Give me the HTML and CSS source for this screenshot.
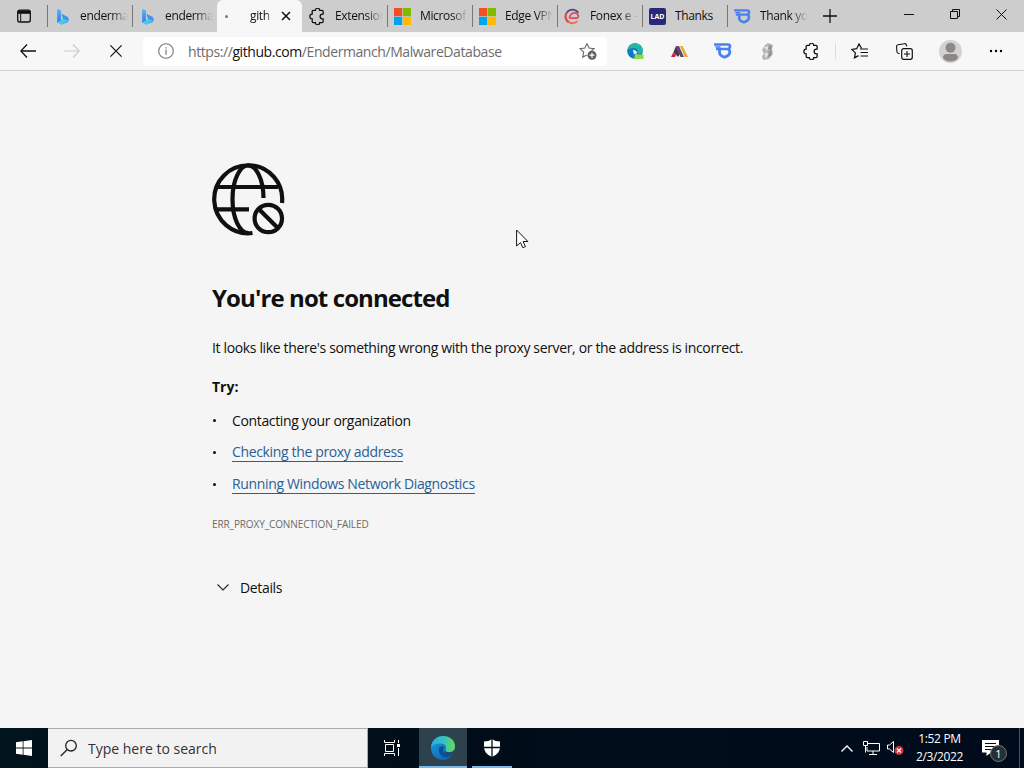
FILE: index.html
```
<!DOCTYPE html>
<html lang="en">
<head>
    <meta charset="UTF-8">
    <title>github.com</title>
    <link rel="stylesheet" href="styles.css">
</head>
<body>

<!-- shared icons -->
<svg class="defs" width="0" height="0">
    <linearGradient id="bing-blue" x1="0" y1="0" x2="0" y2="1">
        <stop offset="0" stop-color="#58b6f5"/>
        <stop offset="1" stop-color="#2878e8"/>
    </linearGradient>
    <linearGradient id="edge-green" x1="0" y1="0" x2="1" y2="0">
        <stop offset="0" stop-color="#2aa9e0"/>
        <stop offset=".55" stop-color="#36c3c0"/>
        <stop offset="1" stop-color="#66dd55"/>
    </linearGradient>
    <linearGradient id="edge-blue" x1="0" y1="0" x2="1" y2="1">
        <stop offset="0" stop-color="#1d9de2"/>
        <stop offset="1" stop-color="#0d57a8"/>
    </linearGradient>
    <symbol id="bing" viewBox="0 0 16 16">
        <path d="M3 1l3.500 1v10L3 14z" fill="url(#bing-blue)"/>
        <path d="M7 5.500l6 3q2 3-.5 5L7 15.500 3 13.500l5.500-3z" fill="#3d95f0"/>
        <path d="M3 13.500l6-3.200 4 1.400-6 4z" fill="#47c8ee"/>
    </symbol>
    <symbol id="microsoft" viewBox="0 0 16 16">
        <path d="M0 0h7.700v7.700H0z" fill="#f25022"/>
        <path d="M8.300 0H16v7.700H8.300z" fill="#7fba00"/>
        <path d="M0 8.300h7.700V16H0z" fill="#00a4ef"/>
        <path d="M8.300 8.300H16V16H8.300z" fill="#ffb900"/>
    </symbol>
    <symbol id="puzzle" viewBox="0 0 16 16">
        <path d="M4 2.200h2a2 2 0 0 1 4 0h2.300q1 0 1 1v2.500h-.6a2.200 2.200 0 0 0 0 4.500h.6v2.600q0 1-1 1H10a2 2 0 0 1-4 0H4q-1 0-1-1v-2.600a2.200 2.200 0 0 1 0-4.400V3.200q0-1 1-1z" fill="none" stroke="currentColor" stroke-width="1.200"/>
    </symbol>
    <symbol id="shield-b" viewBox="0 0 18 18">
        <path d="M0 2.500h14q2 0 2 2T14 7H2" fill="none" stroke="#4c80ef" stroke-width="2.600"/>
        <path d="M5.500 7v3.500q0 3 5 4.700 5-1.700 5.300-4.700Q16 8 14 7" fill="none" stroke="#4c80ef" stroke-width="2.800"/>
        <path d="M1.500 5h5" stroke="#4c80ef" stroke-width="1.600"/>
    </symbol>
    <symbol id="edge" viewBox="0 0 24 24">
        <circle cx="12" cy="12" r="12" fill="url(#edge-blue)"/>
        <path d="M0 11.500C.5 4.500 5.800 0 12 0c7 0 12 4.600 12 10.200 0 4-3 6-6 6-2.800 0-4.300-1.200-3.600-2.300 2-3.200-.4-6.400-4.400-6.400-4.800 0-8.400 2-10 4z" fill="url(#edge-green)"/>
        <path d="M8.200 12c-1.500 5 3 10 8.300 9.200 2-.3 3.600-1.200 5-2.400.5-.4.200-.9-.4-.7-5.100 1.700-9.200-1-9-4.400 0-1.200.6-2 1.200-2.600-2-.9-4.300-.5-5.100.9z" fill="#0b4f96"/>
        <path d="M24 14c-2.400 2.900-9 2.900-9.500.7-.1-.3 0-.6.200-.8-1.700 1.200-1.600 4.700 4.100 4.700 2 0 4-.3 5-1z" class="edge-cut"/>
    </symbol>
</svg>

<div class="browser">
    <div class="tabstrip">
        <div class="tab-menu">
            <svg width="16" height="16" viewBox="0 0 16 16"><rect x="1.700" y="2.200" width="12.600" height="11.800" rx="2" fill="none" stroke="#111" stroke-width="1.300"/><path d="M2 2.500h12v3.300H2z" fill="#111"/><path d="M4.700 5v8.500" stroke="#111" stroke-width="1"/></svg>
        </div>
        <div class="tab"><svg class="favicon"><use href="#bing"/></svg><span class="tab-title fade">enderma</span></div>
        <div class="tab"><svg class="favicon"><use href="#bing"/></svg><span class="tab-title fade">enderma</span></div>
        <div class="tab active">
            <span class="loading-dot"></span>
            <span class="tab-title fade">gith</span>
            <svg class="tab-close" width="10" height="10" viewBox="0 0 10 10"><path d="M1 1l8 8M9 1L1 9" stroke="#111" stroke-width="1.500"/></svg>
        </div>
        <div class="tab first"><svg class="favicon"><use href="#puzzle"/></svg><span class="tab-title fade">Extension</span></div>
        <div class="tab"><svg class="favicon"><use href="#microsoft"/></svg><span class="tab-title fade">Microsof</span></div>
        <div class="tab"><svg class="favicon"><use href="#microsoft"/></svg><span class="tab-title fade">Edge VPN</span></div>
        <div class="tab">
            <svg class="favicon" viewBox="0 0 16 16"><path d="M13.500 4.500A6.500 6.500 0 0 0 2.500 4.500" fill="none" stroke="#4e4b8c" stroke-width="1.600"/><path d="M2.500 4.500a6.500 6.500 0 0 0 2 9" fill="none" stroke="#e04848" stroke-width="2.200"/><path d="M4.500 13.300q4.500 2.500 8-1" fill="none" stroke="#ee7040" stroke-width="1.800"/><path d="M5 9.500h6.500q2 0 2-2-.5-3-4-3-3.500.5-4.500 5" fill="none" stroke="#d94a64" stroke-width="1.600"/></svg>
            <span class="tab-title fade">Fonex e -</span>
        </div>
        <div class="tab"><span class="favicon lad">LAD</span><span class="tab-title">Thanks</span></div>
        <div class="tab"><svg class="favicon"><use href="#shield-b"/></svg><span class="tab-title fade">Thank yo</span></div>
        <div class="new-tab">
            <svg width="14" height="14" viewBox="0 0 14 14"><path d="M7 0v14M0 7h14" stroke="#111" stroke-width="1.300"/></svg>
        </div>
        <div class="window-controls">
            <span><svg width="10" height="10" viewBox="0 0 10 10"><path d="M0 5.500h10" stroke="#111"/></svg></span>
            <span><svg width="10" height="10" viewBox="0 0 10 10"><path d="M.5 2.500h7v7h-7zM2.500 2V.5h7v7H8" fill="none" stroke="#111"/></svg></span>
            <span><svg width="11" height="11" viewBox="0 0 11 11"><path d="M.5.500l10 10M10.500.500l-10 10" stroke="#111"/></svg></span>
        </div>
    </div>

    <div class="toolbar">
        <span class="tool"><svg width="16" height="14" viewBox="0 0 16 14"><path d="M7 .5L.8 7 7 13.500M1 7h15" fill="none" stroke="#111" stroke-width="1.300"/></svg></span>
        <span class="tool disabled"><svg width="16" height="14" viewBox="0 0 16 14"><path d="M9 .5L15.200 7 9 13.500M15 7H0" fill="none" stroke="#ccc" stroke-width="1.200"/></svg></span>
        <span class="tool"><svg width="12" height="12" viewBox="0 0 12 12"><path d="M.4.400l11.200 11.200M11.600.400L.4 11.600" stroke="#111" stroke-width="1.200"/></svg></span>
        <div class="address">
            <svg width="16" height="16" viewBox="0 0 16 16"><circle cx="8" cy="8" r="7.300" fill="none" stroke="#777" stroke-width="1.100"/><path d="M8 6.800v5M8 4.200v1.300" stroke="#777" stroke-width="1.200"/></svg>
            <span class="url">https://<b>github.com</b>/Endermanch/MalwareDatabase</span>
            <svg width="18" height="18" viewBox="0 0 18 18"><path d="M8 1.500l2.100 4.600 4.900.6-3.700 3.400M8 1.500L5.900 6.100 1 6.700l3.700 3.500-1 5 4-2.300" fill="none" stroke="#666" stroke-width="1.100"/><circle cx="13" cy="13.200" r="4.500" fill="#606060"/><path d="M13 10.700v5M10.500 13.200h5" stroke="#fff" stroke-width="1.200"/></svg>
        </div>
        <div class="extensions">
            <span class="tool"><svg width="17" height="17" viewBox="0 0 17 17"><circle cx="8" cy="8" r="7.800" fill="#1279c9"/><path d="M.5 7C1.500 2.500 4.500.2 8 .2c5 0 8.300 3.800 7.800 8-.4 2.300-2.600 3-5 2.400C12 7 9 4.500 6 5Q2 5.500.5 7z" fill="#22b5a8"/><path d="M6 6.500l1 5 1.200-1.200 1.300 2 .8-.5L9 9.700l1.800-.4z" fill="#fff"/><path d="M8 11.500h8.500V16H7z" fill="#8edc45"/></svg></span>
            <span class="tool"><svg width="17" height="13" viewBox="0 0 17 13"><path d="M0 12l2.500-5L5 10l-1 2z" fill="#cf2440"/><path d="M2.500 7L5 1l4 8-2 3z" fill="#523050"/><path d="M5 1h3l5 11H9.500z" fill="#61466e"/><path d="M9 1h2.500L17 12h-3z" fill="#eda52c"/></svg></span>
            <span class="tool"><svg width="18" height="18"><use href="#shield-b"/></svg></span>
            <span class="tool"><svg width="13" height="17" viewBox="0 0 13 17"><path d="M7 0l5 2-1 4 1 5-4 5-6 1-1-4 2-2-2-4 3-5z" fill="#b5b5b5"/><path d="M3 4l5-1-2 5zM4 9l4 2-4 4z" fill="#e3e3e3"/><path d="M8 2l3 1-1 4-3-1zM8 8l3-1-1 6-3 1z" fill="#929292"/></svg></span>
            <span class="tool"><svg width="17" height="17"><use href="#puzzle"/></svg></span>
        </div>
        <span class="separator"></span>
        <span class="tool"><svg width="18" height="16" viewBox="0 0 18 16"><path d="M10.500 5.200L8 .9 5.700 5.700.8 6.400l3.600 3.500-.9 4.900 4-2.200M9 6h8M9.500 9.500H17M9.500 13H17" fill="none" stroke="#111" stroke-width="1.200"/></svg></span>
        <span class="tool"><svg width="17" height="17" viewBox="0 0 17 17"><path d="M3.500 10.700l-1.300-.4Q1 10 .9 8.700L.6 3.500Q.5 2 2 1.700L8.500.7q1.500-.2 1.900 1.100l.5 1.500" fill="none" stroke="#111" stroke-width="1.100"/><rect x="5.700" y="5.700" width="10.600" height="10.600" rx="2" fill="none" stroke="#111" stroke-width="1.200"/><path d="M11 8v6M8 11h6" stroke="#111" stroke-width="1.100"/></svg></span>
        <span class="tool profile"><svg width="23" height="23" viewBox="0 0 23 23"><circle cx="11.500" cy="11.500" r="11.500" fill="#d4d2d0"/><circle cx="11.500" cy="7.700" r="5" fill="#8b8886"/><path d="M4 18c0-3.500 2-4 4-4h7c2 0 4 .5 4 4-1.500 2.500-4.500 3.500-7.500 3.500S5.500 20.500 4 18z" fill="#8b8886"/></svg></span>
        <span class="tool more"><svg width="14" height="4" viewBox="0 0 14 4"><circle cx="2" cy="2" r="1.200"/><circle cx="7" cy="2" r="1.200"/><circle cx="12" cy="2" r="1.200"/></svg></span>
    </div>

    <main class="error-page">
        <svg class="globe" width="74" height="74" viewBox="0 0 74 74">
            <g fill="none" stroke="#101010" stroke-width="4.200">
                <path d="M41.500 71A34 34 0 1 1 71 41"/>
                <path d="M6 25h61M4 47.300h34"/>
                <path d="M52.500 36C52.500 17 45 3.500 37 3.500S21.500 18 21.500 37s7 34 16 34"/>
                <circle cx="57.300" cy="56.500" r="13.700"/>
                <path d="M47.500 46.700l19.600 19.600"/>
            </g>
        </svg>
        <h1>You're not connected</h1>
        <p class="summary">It looks like there's something wrong with the proxy server, or the address is incorrect.</p>
        <p class="try">Try:</p>
        <ul class="suggestions">
            <li>Contacting your organization</li>
            <li><a href="#">Checking the proxy address</a></li>
            <li><a href="#">Running Windows Network Diagnostics</a></li>
        </ul>
        <p class="error-code">ERR_PROXY_CONNECTION_FAILED</p>
        <div class="details">
            <svg width="12" height="7" viewBox="0 0 12 7"><path d="M.5.500L6 6 11.500.500" fill="none" stroke="#222" stroke-width="1.100"/></svg>
            <span>Details</span>
        </div>
    </main>
</div>

<div class="taskbar">
    <div class="start">
        <svg width="16" height="16" viewBox="0 0 16 16"><path d="M0 2.300L6.700 1.300v6.300H0zM7.500 1.200L16 0v7.600H7.500zM0 8.400h6.700v6.300L0 13.700zM7.500 8.400H16V16l-8.500-1.200z" fill="#fff"/></svg>
    </div>
    <div class="search">
        <svg width="18" height="18" viewBox="0 0 18 18"><circle cx="11" cy="6.700" r="5.300" fill="none" stroke="#222" stroke-width="1.300"/><path d="M7.300 10.500L.8 17" stroke="#222" stroke-width="1.300"/></svg>
        <span>Type here to search</span>
    </div>
    <div class="task-view">
        <svg width="17" height="16" viewBox="0 0 17 16"><path d="M.5 0v2.500h10V0M.5 16v-2.500h10V16M1.500 4.500h8v7h-8zM14.500 0v3M14.500 8v8" fill="none" stroke="#fff"/><path d="M13 4h3v3h-3z" fill="#fff"/></svg>
    </div>
    <div class="app edge-app"><svg width="24" height="24"><use href="#edge"/></svg></div>
    <div class="app defender">
        <svg width="16" height="18" viewBox="0 0 16 18"><path d="M8 0q3 2.500 8 2.500V8q0 6.500-8 10Q0 14.500 0 8V2.500Q5 2.500 8 0z" fill="#fff"/><path d="M8 0v18M0 8.500h16" stroke="#000d1b" stroke-width="1.300"/></svg>
    </div>
    <div class="tray">
        <svg class="tray-arrow" width="12" height="7" viewBox="0 0 12 7"><path d="M.5 6.500L6 1l5.500 5.500" fill="none" stroke="#fff" stroke-width="1.300"/></svg>
        <svg class="network" width="17" height="15" viewBox="0 0 17 15"><path d="M5 2.500h11.500v7.500H4V6M10 10v3.500M6 13.500h8M.5.500h4v4h-4zM2.500 4.500v7" fill="none" stroke="#fff"/></svg>
        <svg class="volume" width="17" height="16" viewBox="0 0 17 16"><path d="M.5 5h2l4-3.500v11L2.500 9h-2z" fill="none" stroke="#fff"/><circle cx="12" cy="10.500" r="4.500" fill="#cf3434"/><path d="M10 8.500l4 4M14 8.500l-4 4" stroke="#fff" stroke-width="1.200"/></svg>
        <div class="clock"><span>1:52 PM</span><span>2/3/2022</span></div>
        <div class="notifications">
            <svg width="17" height="16" viewBox="0 0 17 16"><path d="M0 0h17v12.500H9L4.500 16v-3.500H0z" fill="#fff"/><path d="M3 3.500h11M3 6.500h11M3 9.500h8" stroke="#000a1a"/></svg>
            <span class="badge">1</span>
        </div>
        <div class="show-desktop"></div>
    </div>
</div>

<svg class="cursor" width="13" height="20" viewBox="0 0 13 20"><path d="M.6 1v16l3.900-3.500 2.300 5.200 2.600-1.100-2.300-5.100h4.800z" fill="#fff" stroke="#111" stroke-width="1"/></svg>

</body>
</html>
```
FILE: styles.css
```
* {
    box-sizing: border-box;
}

body {
    margin: 0;
    height: 100vh;
    display: flex;
    flex-direction: column;
    overflow: hidden;
    font-family: "Open Sans", "Noto Sans", sans-serif;
    font-size: 14px;
    color: #101010;
    background: #f5f5f5;
}

svg {
    display: block;
    flex: none;
}

.defs {
    position: absolute;
}

.browser {
    flex: 1;
    min-height: 0;
}

/* tabs */
.tabstrip {
    display: flex;
    height: 32px;
    background: #cdcdcd;
}

.tab-menu {
    width: 47px;
    display: flex;
    align-items: center;
    justify-content: center;
}

.tab {
    width: 85px;
    height: 32px;
    padding: 0 4px 0 6px;
    display: flex;
    align-items: center;
    border-left: 1px solid #777;
    border-image: linear-gradient(transparent 6px, #777 6px, #777 26px, transparent 26px) 1;
}

.tab.active {
    border: 0;
    background: #f7f7f7;
    border-radius: 6px 6px 0 0;
    padding: 0 11px 0 8px;
}

.tab.first {
    border-image: none;
    border-color: transparent;
}

.favicon {
    flex: none;
    width: 17px;
    height: 17px;
    margin-right: 9px;
}

.lad {
    background: #282878;
    border-radius: 2px;
    color: #fff;
    font-size: 7px;
    font-weight: 700;
    line-height: 17px;
    text-align: center;
}

.tab-title {
    flex: 1;
    overflow: hidden;
    white-space: nowrap;
    font-size: 12px;
    line-height: 18px;
    letter-spacing: -0.35px;
}

.fade {
    -webkit-mask-image: linear-gradient(to right, #000 65%, transparent);
    mask-image: linear-gradient(to right, #000 65%, transparent);
}

.loading-dot {
    width: 3px;
    height: 3px;
    margin-right: 22px;
    border-radius: 50%;
    background: #777;
}

.tab-close {
    margin-left: 7px;
}

.new-tab {
    width: 36px;
    display: flex;
    align-items: center;
    justify-content: center;
}

.window-controls {
    display: flex;
    margin-left: auto;
    height: 28px;
}

.window-controls span {
    width: 46px;
    display: flex;
    align-items: center;
    justify-content: center;
}

/* toolbar */
.toolbar {
    display: flex;
    align-items: center;
    height: 39px;
    padding-left: 6px;
    background: #f7f7f7;
    border-bottom: 1px solid #d2d2d2;
}

.tool {
    flex: none;
    width: 44px;
    display: flex;
    align-items: center;
    justify-content: center;
}

.address {
    flex: none;
    width: 464px;
    height: 29px;
    margin: 0 6px 0 5px;
    padding: 0 10px 0 15px;
    display: flex;
    align-items: center;
    background: #fff;
    border-radius: 4px;
}

.url {
    flex: 1;
    margin-left: 14px;
    color: #6c6c6c;
    white-space: nowrap;
    letter-spacing: -0.42px;
}

.url b {
    font-weight: 400;
    color: #111;
}

.extensions {
    display: flex;
    align-items: center;
}

.separator {
    width: 1px;
    height: 16px;
    margin: 0 2px;
    background: #ddd;
}

.profile,
.more {
    margin-left: 2px;
}

/* error page */
.error-page {
    padding: 91px 0 0 211px;
    letter-spacing: -0.35px;
}

.error-page h1 {
    margin: 44px 0 0 1px;
    font-size: 24px;
    line-height: 36px;
    font-weight: 700;
    letter-spacing: -0.9px;
}

.error-page p {
    margin: 0 0 0 1px;
    line-height: 20px;
    white-space: nowrap;
}

.error-page .summary {
    margin-top: 22px;
}

.error-page .try {
    margin-top: 19px;
    font-weight: 700;
    letter-spacing: 0;
}

.suggestions {
    list-style: none;
    margin: 7px 0 0 1px;
    padding: 0;
}

.suggestions li {
    display: flex;
    align-items: center;
    height: 32px;
}

.suggestions li::before {
    content: "";
    width: 3px;
    height: 3px;
    margin: 0 16px 0 1px;
    border-radius: 50%;
    background: #111;
}

.suggestions a {
    color: #2a6096;
    line-height: 18px;
    text-decoration: none;
    border-bottom: 1px solid #2a6096;
}

.error-page .error-code {
    margin-top: 14px;
    font-size: 10px;
    font-weight: 500;
    letter-spacing: -0.1px;
    color: #6b6b6b;
}

.details {
    display: flex;
    align-items: center;
    gap: 11px;
    height: 32px;
    margin: 37px 0 0 6px;
}

/* taskbar */
.taskbar {
    display: flex;
    height: 40px;
    color: #fff;
    background: linear-gradient(to right, #00141e, #000d19 50%, #000b1c);
}

.start,
.task-view {
    width: 48px;
    display: flex;
    align-items: center;
    justify-content: center;
}

.search {
    width: 320px;
    display: flex;
    align-items: center;
    gap: 10px;
    padding-left: 12px;
    color: #333;
    background: #f2f2f2;
    border: 1px solid #aaa;
    border-left: 0;
}

.app {
    display: flex;
    align-items: center;
    justify-content: center;
    border-bottom: 2px solid #76b9ed;
    padding-top: 2px;
}

.edge-app {
    width: 48px;
    margin: 0 5px 0 3px;
    background: #2d424d;
}

.edge-cut {
    fill: #2d424d;
}

.defender {
    width: 40px;
}

.tray {
    display: flex;
    align-items: center;
    margin-left: auto;
}

.network {
    margin-left: 10px;
}

.volume {
    margin-left: 7px;
}

.clock {
    width: 71px;
    display: flex;
    flex-direction: column;
    align-items: center;
    font-size: 12px;
    line-height: 18px;
    letter-spacing: -0.35px;
}

.notifications {
    position: relative;
    width: 44px;
    padding-left: 7px;
}

.badge {
    position: absolute;
    left: 15px;
    top: 5px;
    width: 17px;
    height: 17px;
    border: 1px solid #777;
    border-radius: 50%;
    background: #252f38;
    font-size: 11px;
    line-height: 15px;
    text-align: center;
}

.show-desktop {
    width: 5px;
    height: 40px;
    border-left: 1px solid #4a535e;
}

/* mouse pointer floats over the page */
.cursor {
    position: absolute;
    left: 516px;
    top: 229px;
}
```
